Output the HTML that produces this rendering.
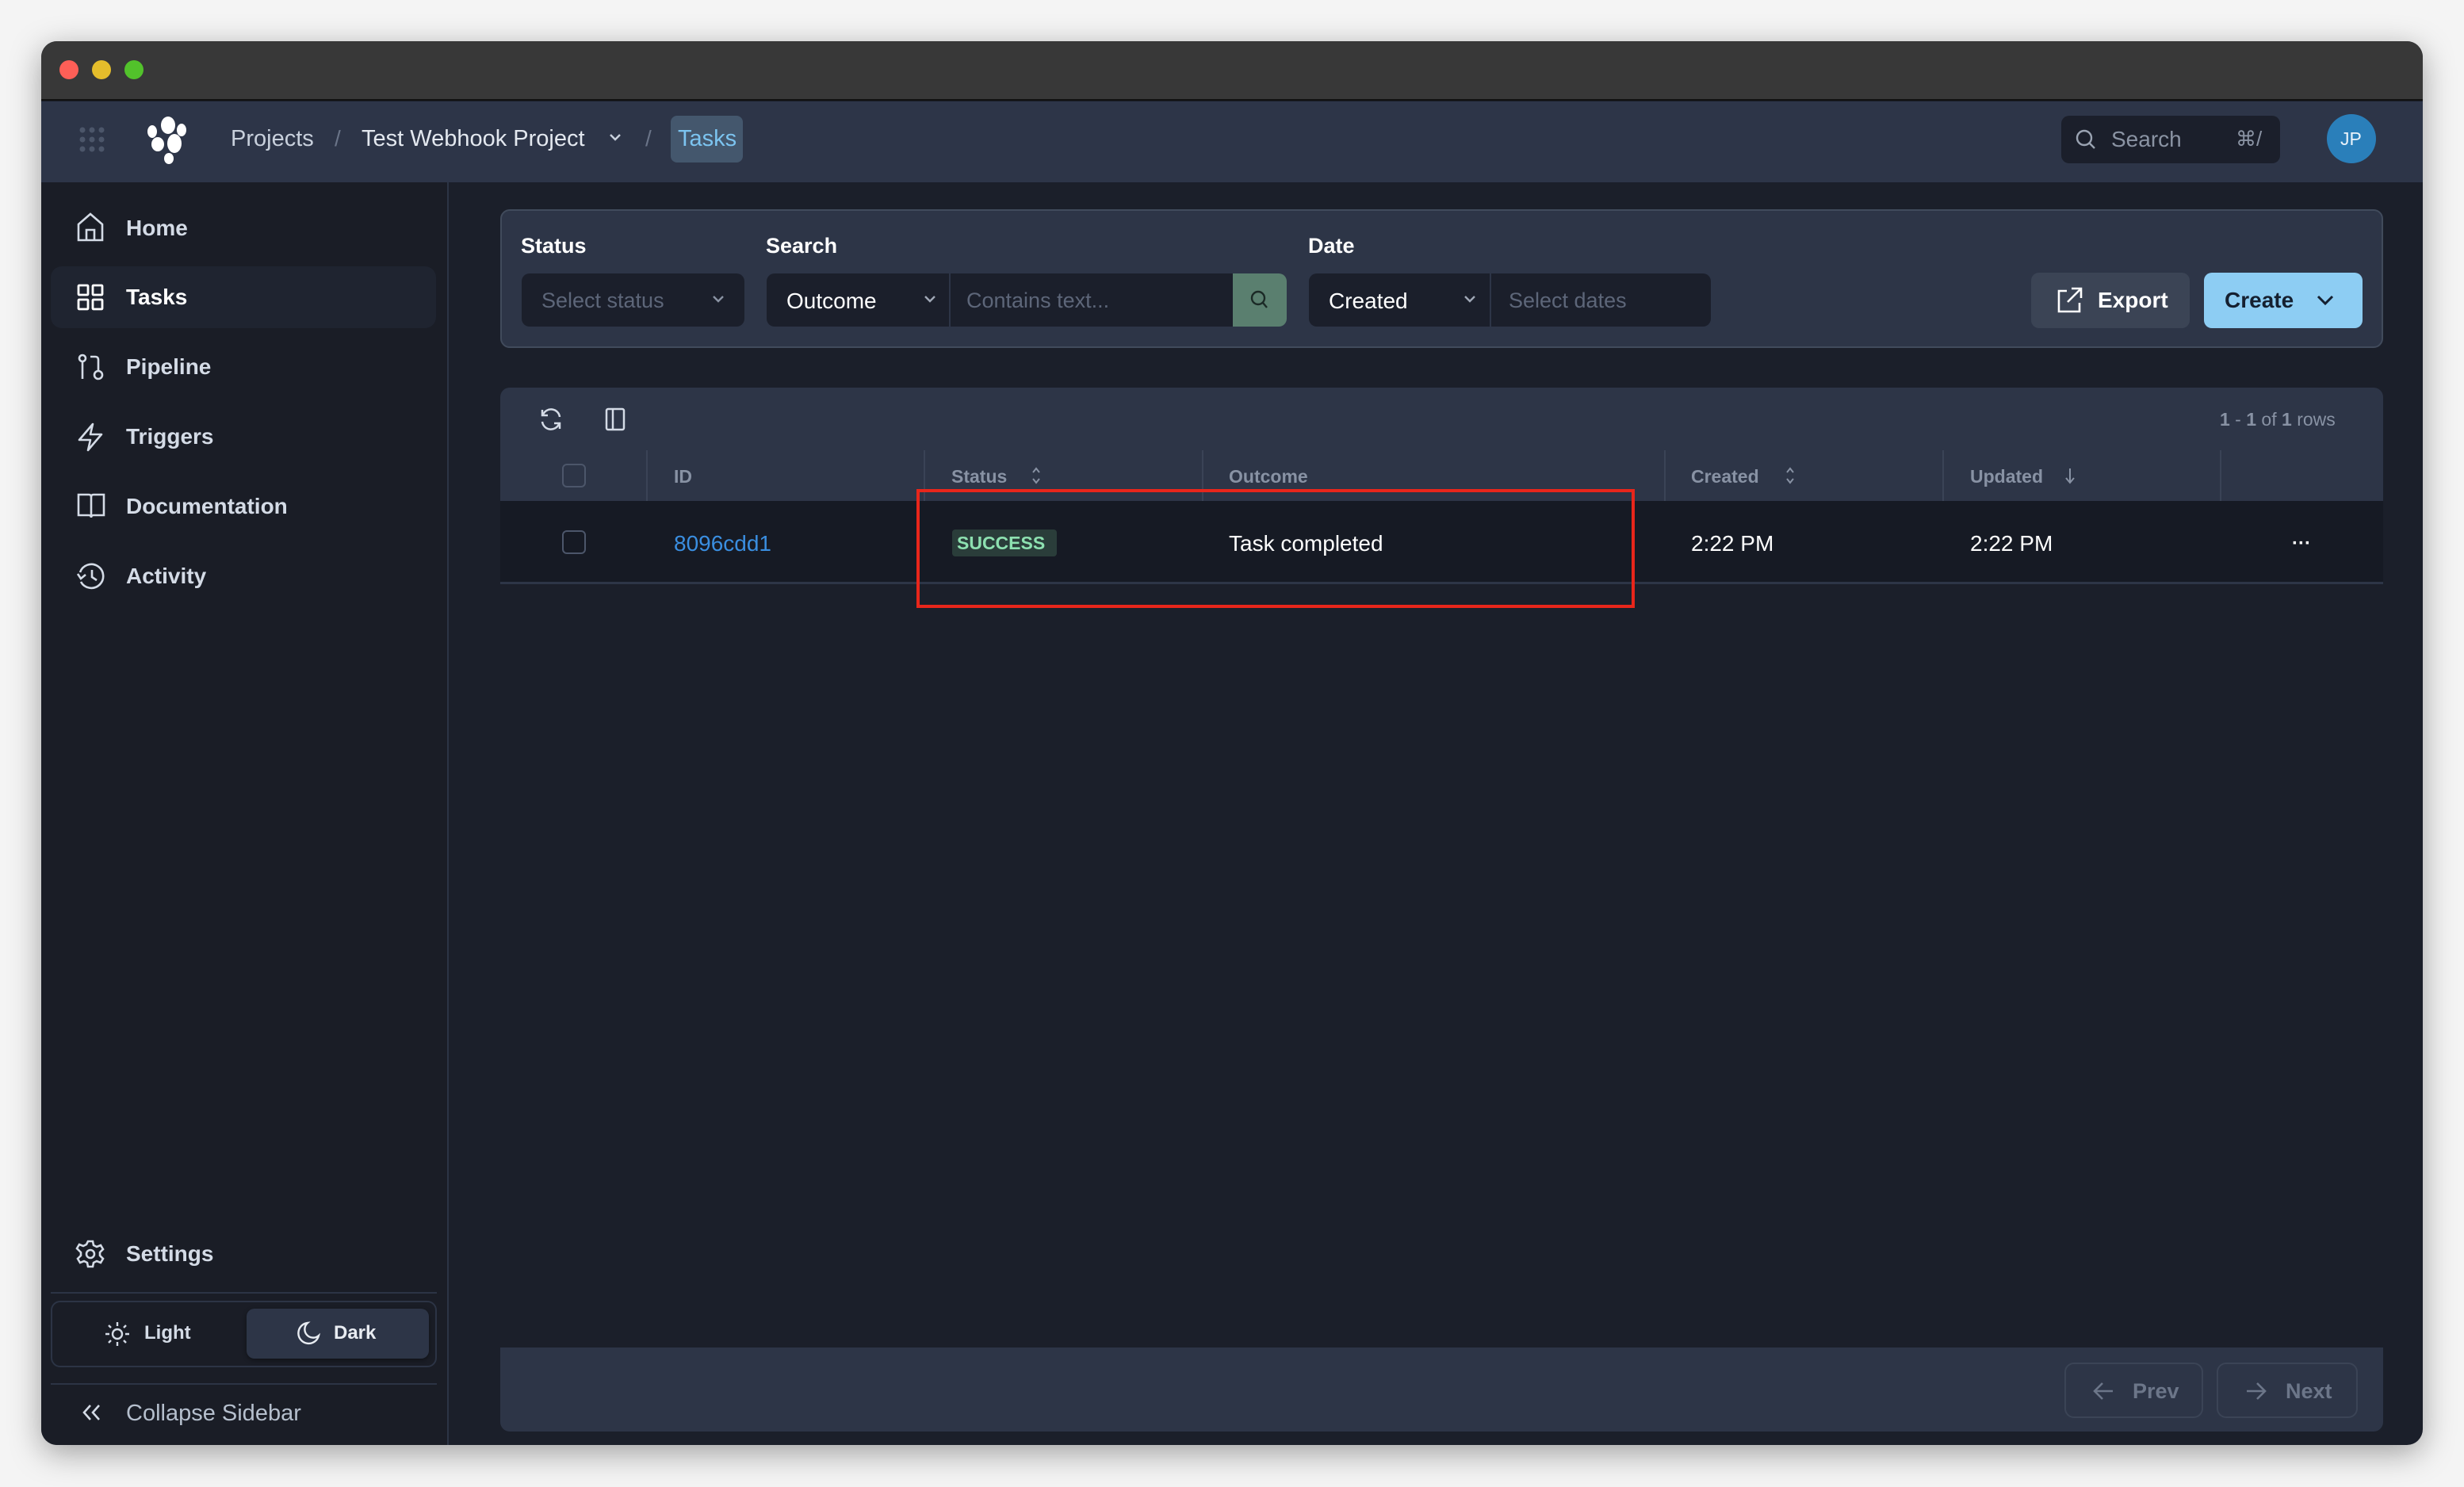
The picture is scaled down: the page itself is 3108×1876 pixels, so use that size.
<!DOCTYPE html>
<html><head><meta charset="utf-8"><style>
*{box-sizing:border-box;margin:0;padding:0}
body{width:3108px;height:1876px;background:#f4f4f4;font-family:"Liberation Sans",sans-serif;position:relative;overflow:hidden}
.a{position:absolute}
.win{left:52px;top:52px;width:3004px;height:1771px;border-radius:20px;overflow:hidden;background:#1b1f2a;box-shadow:0 10px 40px rgba(0,0,0,.35)}
.t{position:absolute;white-space:nowrap;line-height:1}
svg{position:absolute;overflow:visible}
.nav{font-size:28px;font-weight:bold;color:#d4dbe6}
.inp{background:#1b1f2b;height:67px}
.ph{color:#5d6679;font-size:27px}
.hd{color:#8892a4;font-size:23px;font-weight:bold}
.sep{width:2px;height:64px;background:#3a4356;top:568px}
</style></head><body>
<div class="a win"></div>
<!-- titlebar -->
<div class="a" style="left:52px;top:52px;width:3004px;height:75px;background:#383838;border-radius:20px 20px 0 0;border-bottom:2px solid #111"></div>
<div class="a" style="left:75px;top:76px;width:24px;height:24px;border-radius:50%;background:#fe5f57"></div>
<div class="a" style="left:116px;top:76px;width:24px;height:24px;border-radius:50%;background:#e5bd2b"></div>
<div class="a" style="left:157px;top:76px;width:24px;height:24px;border-radius:50%;background:#52c22b"></div>
<!-- topnav -->
<div class="a" style="left:52px;top:128px;width:3004px;height:102px;background:#2d3548"></div>
<svg style="left:100px;top:160px" width="32" height="32"><g fill="#4c566a"><circle cx="4" cy="4" r="3.5"/><circle cx="16" cy="4" r="3.5"/><circle cx="28" cy="4" r="3.5"/><circle cx="4" cy="16" r="3.5"/><circle cx="16" cy="16" r="3.5"/><circle cx="28" cy="16" r="3.5"/><circle cx="4" cy="28" r="3.5"/><circle cx="16" cy="28" r="3.5"/><circle cx="28" cy="28" r="3.5"/></g></svg>
<svg style="left:184px;top:146px" width="60" height="60"><g fill="#fff"><ellipse cx="28" cy="12" rx="9" ry="11"/><ellipse cx="8" cy="20" rx="6" ry="8"/><ellipse cx="45" cy="18" rx="6" ry="8"/><ellipse cx="15" cy="36" rx="8" ry="9"/><ellipse cx="36" cy="35" rx="9" ry="12"/><ellipse cx="29" cy="54" rx="6" ry="7"/></g></svg>
<div class="t" style="left:291px;top:161px;font-size:29px;color:#c8d0dc">Projects</div>
<div class="t" style="left:422px;top:161px;font-size:28px;color:#6a7488">/</div>
<div class="t" style="left:456px;top:161px;font-size:29px;color:#e3e8ef">Test Webhook Project</div>
<svg style="left:768px;top:168px" width="16" height="12"><path d="M2 2l6 6 6-6" stroke="#c8d0dc" stroke-width="2.5" fill="none"/></svg>
<div class="t" style="left:814px;top:161px;font-size:28px;color:#6a7488">/</div>
<div class="a" style="left:846px;top:146px;width:91px;height:59px;background:#44576d;border-radius:8px"></div>
<div class="t" style="left:855px;top:161px;font-size:29px;color:#7cc4f0">Tasks</div>
<div class="a" style="left:2600px;top:146px;width:276px;height:60px;background:#1b1f2b;border-radius:10px"></div>
<svg style="left:2618px;top:163px" width="26" height="26"><circle cx="11" cy="11" r="9" stroke="#9aa3b2" stroke-width="2.4" fill="none"/><path d="M18 18l6 6" stroke="#9aa3b2" stroke-width="2.4"/></svg>
<div class="t" style="left:2663px;top:162px;font-size:28px;color:#8a93a3">Search</div>
<div class="t" style="left:2820px;top:162px;font-size:26px;color:#8a93a3">⌘/</div>
<div class="a" style="left:2935px;top:144px;width:62px;height:62px;border-radius:50%;background:#2a7fba"></div>
<div class="t" style="left:2952px;top:164px;font-size:23px;color:#e8f2fa">JP</div>
<!-- sidebar -->
<div class="a" style="left:52px;top:230px;width:514px;height:1593px;background:#1a1d26;border-right:2px solid #2c3445;border-radius:0 0 0 20px"></div>
<div class="a" style="left:64px;top:336px;width:486px;height:78px;background:#1f2430;border-radius:14px"></div>
<svg style="left:97px;top:268px" width="36" height="38" fill="none" stroke="#d4dbe6" stroke-width="2.6"><path d="M2 15L17 2l15 13v20H2z"/><path d="M12 35V22h10v13"/></svg>
<div class="t nav" style="left:159px;top:274px">Home</div>
<svg style="left:97px;top:358px" width="34" height="34" fill="none" stroke="#fff" stroke-width="2.8"><rect x="2" y="2" width="12" height="12" rx="1"/><rect x="20" y="2" width="12" height="12" rx="1"/><rect x="2" y="20" width="12" height="12" rx="1"/><rect x="20" y="20" width="12" height="12" rx="1"/></svg>
<div class="t nav" style="left:159px;top:361px;color:#fff">Tasks</div>
<svg style="left:97px;top:446px" width="34" height="34" fill="none" stroke="#d4dbe6" stroke-width="2.6"><circle cx="7" cy="6" r="4"/><path d="M7 10v22"/><circle cx="27" cy="27" r="5"/><path d="M27 22V8q0-4-4-4h-6"/></svg>
<div class="t nav" style="left:159px;top:449px">Pipeline</div>
<svg style="left:97px;top:533px" width="34" height="36" fill="none" stroke="#d4dbe6" stroke-width="2.6" stroke-linejoin="round"><path d="M20 2L3 22h14l-3 13 17-20H17z"/></svg>
<div class="t nav" style="left:159px;top:537px">Triggers</div>
<svg style="left:97px;top:622px" width="36" height="34" fill="none" stroke="#d4dbe6" stroke-width="2.6"><path d="M2 2h13q3 0 3 3v26q0-3-3-3H2zM34 2H21q-3 0-3 3v26q0-3 3-3h13z"/></svg>
<div class="t nav" style="left:159px;top:625px">Documentation</div>
<svg style="left:96px;top:710px" width="36" height="34" fill="none" stroke="#d4dbe6" stroke-width="2.6"><path d="M5 12A15 15 0 1 1 6 24"/><path d="M2 14l4 6 6-5"/><path d="M20 9v9l6 4"/></svg>
<div class="t nav" style="left:159px;top:713px">Activity</div>
<svg style="left:95px;top:1563px" width="38" height="38" fill="none" stroke="#d4dbe6" stroke-width="2.6"><circle cx="19" cy="19" r="5"/><path d="M16 3h6l1 5 4 2 5-2 3 5-4 4v4l4 4-3 5-5-2-4 2-1 5h-6l-1-5-4-2-5 2-3-5 4-4v-4L2 12l3-5 5 2 4-2z"/></svg>
<div class="t nav" style="left:159px;top:1568px">Settings</div>
<div class="a" style="left:64px;top:1630px;width:487px;height:2px;background:#2c3445"></div>
<div class="a" style="left:64px;top:1641px;width:487px;height:84px;border:2px solid #2c3445;border-radius:12px"></div>
<div class="a" style="left:311px;top:1651px;width:230px;height:63px;background:#2d3547;border-radius:10px;box-shadow:0 2px 6px rgba(0,0,0,.4)"></div>
<svg style="left:132px;top:1667px" width="32" height="32" stroke="#d4dbe6" stroke-width="2.4" fill="none"><circle cx="16" cy="16" r="6"/><path d="M16 1v5M16 26v5M1 16h5M26 16h5M5 5l3 3M24 24l3 3M5 27l3-3M24 8l3-3"/></svg>
<div class="t" style="left:182px;top:1670px;font-size:24px;font-weight:bold;color:#d4dbe6">Light</div>
<svg style="left:374px;top:1667px" width="30" height="30" fill="none" stroke="#e8ecf2" stroke-width="2.4"><path d="M14 2A13 13 0 1 0 28 18 10 10 0 0 1 14 2z"/></svg>
<div class="t" style="left:421px;top:1670px;font-size:24px;font-weight:bold;color:#e8ecf2">Dark</div>
<div class="a" style="left:64px;top:1745px;width:487px;height:2px;background:#2c3445"></div>
<svg style="left:103px;top:1771px" width="26" height="22" fill="none" stroke="#d4dbe6" stroke-width="2.6"><path d="M11 2L3 11l8 9M22 2l-8 9 8 9"/></svg>
<div class="t" style="left:159px;top:1769px;font-size:29px;color:#b5bfcd">Collapse Sidebar</div>
<!-- filter card -->
<div class="a" style="left:631px;top:264px;width:2375px;height:175px;background:#2d3547;border:2px solid #414b5c;border-radius:12px"></div>
<div class="t" style="left:657px;top:297px;font-size:27px;font-weight:bold;color:#fff">Status</div>
<div class="t" style="left:966px;top:297px;font-size:27px;font-weight:bold;color:#fff">Search</div>
<div class="t" style="left:1650px;top:297px;font-size:27px;font-weight:bold;color:#fff">Date</div>
<div class="a inp" style="left:658px;top:345px;width:281px;border-radius:10px"></div>
<div class="t ph" style="left:683px;top:366px">Select status</div>
<svg style="left:898px;top:372px" width="16" height="12"><path d="M2 2l6 6 6-6" stroke="#8a93a3" stroke-width="2.4" fill="none"/></svg>
<div class="a inp" style="left:967px;top:345px;width:588px;border-radius:10px 0 0 10px"></div>
<div class="a" style="left:1197px;top:345px;width:2px;height:67px;background:#2d3547"></div>
<div class="t" style="left:992px;top:366px;font-size:28px;color:#fff">Outcome</div>
<svg style="left:1165px;top:372px" width="16" height="12"><path d="M2 2l6 6 6-6" stroke="#a0a8b6" stroke-width="2.4" fill="none"/></svg>
<div class="t ph" style="left:1219px;top:366px">Contains text...</div>
<div class="a" style="left:1555px;top:345px;width:68px;height:67px;background:#5a7f6f;border-radius:0 10px 10px 0"></div>
<svg style="left:1577px;top:366px" width="24" height="26"><circle cx="10" cy="10" r="8" stroke="#1b2a26" stroke-width="2.4" fill="none"/><path d="M16 16l5 6" stroke="#1b2a26" stroke-width="2.4"/></svg>
<div class="a inp" style="left:1651px;top:345px;width:507px;border-radius:10px"></div>
<div class="a" style="left:1879px;top:345px;width:2px;height:67px;background:#2d3547"></div>
<div class="t" style="left:1676px;top:366px;font-size:28px;color:#fff">Created</div>
<svg style="left:1846px;top:372px" width="16" height="12"><path d="M2 2l6 6 6-6" stroke="#a0a8b6" stroke-width="2.4" fill="none"/></svg>
<div class="t ph" style="left:1903px;top:366px">Select dates</div>
<div class="a" style="left:2562px;top:344px;width:200px;height:70px;background:#3b4455;border-radius:10px"></div>
<svg style="left:2593px;top:362px" width="34" height="34" fill="none" stroke="#fff" stroke-width="2.6"><path d="M14 5H4v26h26V20M20 2h12v12M32 2L15 19"/></svg>
<div class="t" style="left:2646px;top:365px;font-size:28px;font-weight:bold;color:#fff">Export</div>
<div class="a" style="left:2780px;top:344px;width:200px;height:70px;background:#8dcdf3;border-radius:10px"></div>
<div class="t" style="left:2806px;top:365px;font-size:28px;font-weight:bold;color:#152030">Create</div>
<svg style="left:2922px;top:372px" width="22" height="14"><path d="M2 2l9 9 9-9" stroke="#152030" stroke-width="3" fill="none"/></svg>
<!-- table -->
<div class="a" style="left:631px;top:489px;width:2375px;height:143px;background:#2d3547;border-radius:12px 12px 0 0"></div>
<svg style="left:680px;top:514px" width="30" height="30" fill="none" stroke="#d4dbe6" stroke-width="2.5"><path d="M26 12A11 11 0 0 0 5 9M4 18a11 11 0 0 0 21 3"/><path d="M4 3v7h7M26 27v-7h-7"/></svg>
<svg style="left:763px;top:514px" width="26" height="30" fill="none" stroke="#d4dbe6" stroke-width="2.5"><rect x="2" y="2" width="22" height="26" rx="2"/><path d="M10 2v26"/></svg>
<div class="t" style="left:2800px;top:518px;font-size:23px;color:#8892a4"><b>1</b> - <b>1</b> of <b>1</b> rows</div>
<div class="a sep" style="left:815px"></div><div class="a sep" style="left:1165px"></div><div class="a sep" style="left:1516px"></div><div class="a sep" style="left:2099px"></div><div class="a sep" style="left:2450px"></div><div class="a sep" style="left:2800px"></div>
<div class="a" style="left:709px;top:585px;width:30px;height:30px;border:2px solid #4c566a;border-radius:6px"></div>
<div class="t hd" style="left:850px;top:590px">ID</div>
<div class="t hd" style="left:1200px;top:590px">Status</div>
<svg style="left:1300px;top:588px" width="14" height="24" fill="none" stroke="#8892a4" stroke-width="2"><path d="M3 8l4-5 4 5M3 16l4 5 4-5"/></svg>
<div class="t hd" style="left:1550px;top:590px">Outcome</div>
<div class="t hd" style="left:2133px;top:590px">Created</div>
<svg style="left:2251px;top:588px" width="14" height="24" fill="none" stroke="#8892a4" stroke-width="2"><path d="M3 8l4-5 4 5M3 16l4 5 4-5"/></svg>
<div class="t hd" style="left:2485px;top:590px">Updated</div>
<svg style="left:2604px;top:588px" width="14" height="24" fill="none" stroke="#8892a4" stroke-width="2"><path d="M7 3v18M2 15l5 6 5-6"/></svg>
<div class="a" style="left:631px;top:632px;width:2375px;height:105px;background:#161a24;border-bottom:3px solid #2d3547"></div>
<div class="a" style="left:709px;top:669px;width:30px;height:30px;border:2px solid #4c566a;border-radius:6px"></div>
<div class="t" style="left:850px;top:672px;font-size:28px;color:#3a8ee0">8096cdd1</div>
<div class="a" style="left:1201px;top:668px;width:132px;height:34px;background:#2a3d3a;border-radius:4px"></div>
<div class="t" style="left:1207px;top:674px;font-size:23px;font-weight:bold;color:#8de0b0">SUCCESS</div>
<div class="t" style="left:1550px;top:672px;font-size:28px;color:#fff">Task completed</div>
<div class="t" style="left:2133px;top:672px;font-size:28px;color:#fff">2:22 PM</div>
<div class="t" style="left:2485px;top:672px;font-size:28px;color:#fff">2:22 PM</div>
<div class="t" style="left:2891px;top:674px;font-size:24px;color:#fff;font-weight:bold">···</div>
<div class="a" style="left:1156px;top:617px;width:906px;height:150px;border:4px solid #e8261b"></div>
<!-- pagination -->
<div class="a" style="left:631px;top:1700px;width:2375px;height:106px;background:#2d3547;border-radius:0 0 12px 12px"></div>
<div class="a" style="left:2604px;top:1719px;width:175px;height:70px;border:2px solid #3b4456;border-radius:12px"></div>
<svg style="left:2639px;top:1742px" width="28" height="26" fill="none" stroke="#6c7689" stroke-width="2.6"><path d="M26 13H3M13 3L3 13l10 10"/></svg>
<div class="t" style="left:2690px;top:1742px;font-size:27px;font-weight:bold;color:#6c7689">Prev</div>
<div class="a" style="left:2796px;top:1719px;width:178px;height:70px;border:2px solid #3b4456;border-radius:12px"></div>
<svg style="left:2832px;top:1742px" width="28" height="26" fill="none" stroke="#6c7689" stroke-width="2.6"><path d="M2 13h23M15 3l10 10-10 10"/></svg>
<div class="t" style="left:2883px;top:1742px;font-size:27px;font-weight:bold;color:#6c7689">Next</div>
</body></html>
